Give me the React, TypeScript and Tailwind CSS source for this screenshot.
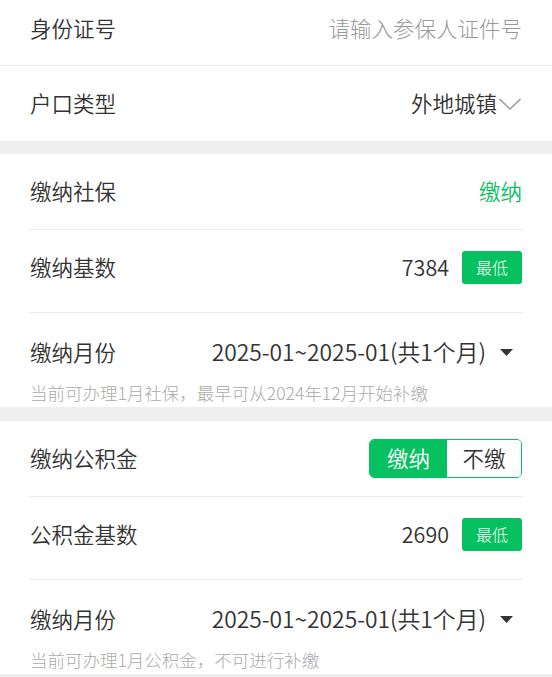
import React from "react";

const GREEN = "bg-[#07c160]";

function Divider() {
  return <div className="mx-[29px] h-px bg-[#ececec]" />;
}

function Band() {
  return <div className="h-[13px] bg-[#efefef]" />;
}

function Badge() {
  return (
    <div className={`ml-[13px] flex h-[33px] w-[60px] items-center justify-center rounded-[3px] ${GREEN} text-[16px] font-light text-white`}>
      最低
    </div>
  );
}

function Caret() {
  return (
    <svg width="13" height="7" viewBox="0 0 13 7" className="ml-[14px]">
      <path d="M0 0 L13 0 L6.5 7 Z" fill="#333" />
    </svg>
  );
}

function MonthBlock({ hint }: { hint: string }) {
  return (
    <div className="px-[30px] pt-[26px] pb-[4px]">
      <div className="flex h-[26px] items-center justify-between">
        <span className="text-[21.5px] text-[#333]">缴纳月份</span>
        <div className="flex items-center pr-[9px]">
          <span className="text-[22.8px] text-[#333]">2025-01~2025-01(共1个月)</span>
          <Caret />
        </div>
      </div>
      <div className="mt-[18px] flex h-[20px] items-center text-[17.5px] font-light text-[#aaa]">{hint}</div>
    </div>
  );
}

export default function App() {
  return (
    <div
      className="h-[677px] w-[552px] overflow-hidden bg-white font-[350]"
      style={{ fontFamily: '"Noto Sans CJK SC", "Noto Sans", sans-serif' }}
    >
      {/* Section 1 */}
      <div className="flex h-[65px] items-center justify-between px-[30px] pb-[9px]">
        <span className="text-[21.5px] text-[#333]">身份证号</span>
        <span className="text-[21.5px] font-light text-[#999]">请输入参保人证件号</span>
      </div>
      <div className="h-px bg-[#ececec]" />
      <div className="flex h-[75px] items-center justify-between px-[30px]">
        <span className="text-[21.5px] text-[#333]">户口类型</span>
        <div className="flex items-center">
          <span className="text-[21.5px] text-[#333]">外地城镇</span>
          <svg width="24" height="14" viewBox="0 0 24 14" className="ml-[1px] mt-[1px]">
            <path d="M1.5 2 L12 12 L22.5 2" fill="none" stroke="#9a9a9a" strokeWidth="1.6" />
          </svg>
        </div>
      </div>
      <Band />

      {/* Section 2 */}
      <div className="flex h-[75px] items-center justify-between px-[30px]">
        <span className="text-[21.5px] text-[#333]">缴纳社保</span>
        <span className="text-[21.5px] text-[#07c160]">缴纳</span>
      </div>
      <Divider />
      <div className="flex h-[82px] items-center justify-between px-[30px] pb-[8px]">
        <span className="text-[21.5px] text-[#333]">缴纳基数</span>
        <div className="flex items-center">
          <span className="text-[21.5px] text-[#333]">7384</span>
          <Badge />
        </div>
      </div>
      <Divider />
      <MonthBlock hint="当前可办理1月社保，最早可从2024年12月开始补缴" />
      <div className="h-[14px] bg-[#efefef]" />

      {/* Section 3 */}
      <div className="flex h-[75px] items-center justify-between px-[30px]">
        <span className="text-[21.5px] text-[#333]">缴纳公积金</span>
        <div className="flex h-[39px] w-[153px] overflow-hidden rounded-[5px] border border-[#07c160]">
          <div className={`flex w-[77px] items-center justify-center ${GREEN} text-[21.5px] text-white`}>缴纳</div>
          <div className="flex flex-1 items-center justify-center bg-white text-[21.5px] text-[#333]">不缴</div>
        </div>
      </div>
      <Divider />
      <div className="flex h-[82px] items-center justify-between px-[30px] pb-[8px]">
        <span className="text-[21.5px] text-[#333]">公积金基数</span>
        <div className="flex items-center">
          <span className="text-[21.5px] text-[#333]">2690</span>
          <Badge />
        </div>
      </div>
      <Divider />
      <MonthBlock hint="当前可办理1月公积金，不可进行补缴" />
      <div className="h-[14px] bg-[#efefef]" />
    </div>
  );
}
